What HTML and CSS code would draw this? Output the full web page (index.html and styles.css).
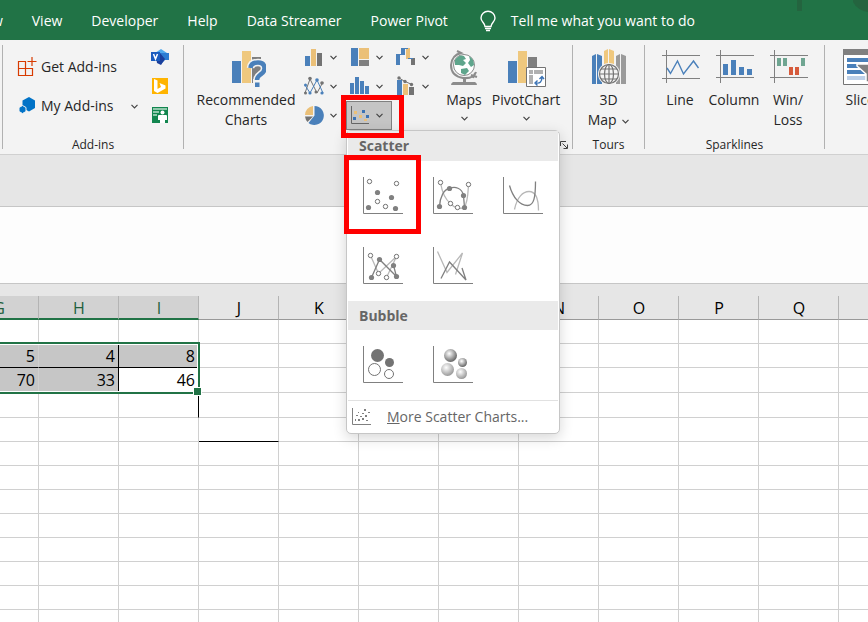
FILE: index.html
```html
<!DOCTYPE html>
<html lang="en">
<head>
    <meta charset="UTF-8">
    <meta name="viewport" content="width=device-width, initial-scale=1.0">
    <title>Spreadsheet - Insert Scatter Chart</title>
    <link rel="stylesheet" href="styles.css">
</head>
<body>
    <svg class="defs" aria-hidden="true">
        <defs>
            <symbol id="chevron" viewBox="0 0 7 5"><path d="M.5 .8L3.5 3.8L6.5 .8" fill="none" stroke="#444" stroke-width="1.2"/></symbol>
            <radialGradient id="ballDark" cx=".4" cy=".35" r=".65">
                <stop offset="0" stop-color="#fff"/>
                <stop offset="1" stop-color="#666"/>
            </radialGradient>
            <radialGradient id="ballLight" cx=".4" cy=".35" r=".65">
                <stop offset="0" stop-color="#fff"/>
                <stop offset="1" stop-color="#999"/>
            </radialGradient>
        </defs>
    </svg>

    <!-- Tabs -->
    <header class="tabbar">
        <nav class="tabs">
            <a href="#">Review</a>
            <a href="#">View</a>
            <a href="#">Developer</a>
            <a href="#">Help</a>
            <a href="#">Data Streamer</a>
            <a href="#">Power Pivot</a>
        </nav>
        <button class="tell-me">
            <svg width="16" height="22" viewBox="0 0 16 22" fill="none" stroke="#fff" stroke-width="1.4"><path d="M5 16.500C5 13 1 12 1 8A6.800 6.500 0 0 1 15 8C15 12 11 13 11 16.500ZM5 18.500H11M6 20.500H10"/></svg>
            <span>Tell me what you want to do</span>
        </button>
        <svg class="tabbar-art" width="72" height="14" viewBox="0 0 72 14" fill="#24643f"><path d="M1 0H6V11H1ZM57 0H72V12Q61 10 57 2Z"/></svg>
    </header>

    <!-- Ribbon -->
    <div class="ribbon">
        <span class="divider divider-first"></span>
        <section class="group group-addins">
            <div class="group-body">
                <div class="addin-list">
                    <button class="addin">
                        <svg width="20" height="20" viewBox="0 0 20 20" fill="none" stroke="#d83b01" stroke-width="1.2"><path d="M1.500 4.500H8.500V18.500H1.500ZM1.500 11.500H15.500V18.500H8.500M15 0V9M10.500 4.500H19.500"/></svg>
                        <span>Get Add-ins</span>
                    </button>
                    <button class="addin">
                        <svg width="20" height="20" viewBox="0 0 20 20" fill="#0173c7"><path d="M12 1L18 4.500V12L12 15.500L5.500 12V4.500Z"/><path d="M5.500 9.500L9 11.500V15.500L5.500 17.500L2 15.500V11.500Z" stroke="#f3f3f3"/></svg>
                        <span>My Add-ins</span>
                        <svg class="chevron" width="7" height="5"><use href="#chevron"/></svg>
                    </button>
                </div>
                <div class="addin-apps">
                    <button class="app" aria-label="Visio">
                        <svg width="18" height="18" viewBox="0 0 18 18"><path d="M10 1L16 5L10 9L4 5Z" fill="#4fa9ee"/><path d="M9 5H18V12H14L10 16Z" fill="#2b7cd3"/><path d="M5 9L9 5L14 11L10 17L6 15Z" fill="#1a3f9c"/><path d="M0 4H9V13H0Z" fill="#1b5cbe"/><path d="M2.500 6L4.500 11L6.500 6" fill="none" stroke="#fff" stroke-width="1.5"/></svg>
                    </button>
                    <button class="app" aria-label="Bing Maps">
                        <svg width="18" height="18" viewBox="0 0 18 18"><path d="M1 1H17V17H1Z" fill="#ffb400"/><path d="M3 2L6.500 3.500V12L10 10L8.500 6L14.500 8.500V11.500L6.500 16L3 14Z" fill="#fff"/></svg>
                    </button>
                    <button class="app" aria-label="People Graph">
                        <svg width="18" height="18" viewBox="0 0 18 18"><path d="M1 1H17V17H1Z" fill="#12864f"/><path d="M2 2H16V4H2ZM2 5H8V7H2ZM2 8H6V10H2Z" fill="#8fc9ac"/><circle cx="11.5" cy="6.5" r="2" fill="#fff"/><path d="M7 10Q7 9 8 9H15Q16 9 16 10V14H14V17H9V14H7Z" fill="#fff"/></svg>
                    </button>
                </div>
            </div>
            <div class="group-label"><span>Add-ins</span></div>
        </section>

        <span class="divider"></span>
        <section class="group group-charts">
            <div class="group-body">
                <button class="large large-wide">
                    <svg width="40" height="40" viewBox="0 0 40 40"><path d="M6 13H15V35H6Z" fill="#4a80ba"/><path d="M16 3H25V35H16Z" fill="#efc87e"/><path d="M26 9H35V35H26Z" fill="#7f7f7f"/><path d="M24.500 20Q25 14.500 32 14.500Q38.500 14.500 38.500 20.500Q38.500 24 34.500 26.500Q31 29 31 32" fill="none" stroke="#f3f3f3" stroke-width="7.5"/><path d="M27 31H35V40H27Z" fill="#f3f3f3"/><path d="M24.500 20Q25 14.500 32 14.500Q38.500 14.500 38.500 20.500Q38.500 24 34.500 26.500Q31 29 31 32" fill="none" stroke="#4a80ba" stroke-width="4.5"/><path d="M29 34.500H33.500V39H29Z" fill="#4a80ba"/></svg>
                    <span>Recommended<br>Charts</span>
                </button>
                <div class="chart-grid">
                    <button class="small" aria-label="Column or bar chart">
                        <svg width="20" height="20" viewBox="0 0 20 20"><path d="M1 9H6V19H1Z" fill="#4a80ba"/><path d="M7 2H12V19H7Z" fill="#ebc078"/><path d="M13 6H18V19H13Z" fill="#737373"/></svg>
                        <svg class="chevron" width="7" height="5"><use href="#chevron"/></svg>
                    </button>
                    <button class="small" aria-label="Hierarchy chart">
                        <svg width="20" height="20" viewBox="0 0 20 20"><path d="M1 1H8V19H1Z" fill="#4a80ba"/><path d="M9 1H19V12H9Z" fill="#ebc078"/><path d="M9 13H19V19H9Z" fill="#7f7f7f"/></svg>
                        <svg class="chevron" width="7" height="5"><use href="#chevron"/></svg>
                    </button>
                    <button class="small" aria-label="Waterfall chart">
                        <svg width="20" height="20" viewBox="0 0 20 20"><path d="M0 7H4V18H0ZM5 1H9V8H5Z" fill="#4a80ba"/><path d="M10 1H14V12H10Z" fill="#ebc078"/><path d="M15 11H19V18H15Z" fill="#737373"/><path d="M2 7.500H7M7 1.500H12M12 11.500H17" stroke="#4a80ba"/></svg>
                        <svg class="chevron" width="7" height="5"><use href="#chevron"/></svg>
                    </button>
                    <button class="small" aria-label="Line chart">
                        <svg width="20" height="20" viewBox="0 0 20 20"><path d="M1 17L6 3L13 17L19 6" fill="none" stroke="#737373"/><path d="M1 9L6 17L13 4L19 17" fill="none" stroke="#4a80ba"/><g fill="#737373"><circle cx="1.5" cy="17" r="1.5"/><circle cx="6" cy="2.5" r="1.8"/><circle cx="12" cy="16" r="1.5"/><circle cx="18" cy="7" r="1.8"/></g><g fill="#4a80ba"><circle cx="1.5" cy="9" r="1.5"/><circle cx="6" cy="17" r="1.6"/><circle cx="13" cy="4" r="1.8"/><circle cx="18" cy="17" r="1.6"/></g></svg>
                        <svg class="chevron" width="7" height="5"><use href="#chevron"/></svg>
                    </button>
                    <button class="small" aria-label="Statistic chart">
                        <svg width="20" height="20" viewBox="0 0 20 20" fill="#4a80ba"><path d="M0 7H4V18H0ZM5 1H9V18H5ZM10 5H14V18H10ZM15 10H19V18H15Z"/></svg>
                        <svg class="chevron" width="7" height="5"><use href="#chevron"/></svg>
                    </button>
                    <button class="small" aria-label="Combo chart">
                        <svg width="20" height="20" viewBox="0 0 20 20"><path d="M1 4H6V19H1Z" fill="#4a80ba"/><path d="M7 8H12V19H7Z" fill="#ebc078"/><path d="M13 11H18V19H13Z" fill="#737373"/><path d="M3 2L9 5.500L16 8.500" fill="none" stroke="#737373"/><g fill="#737373"><circle cx="3" cy="2" r="1.7"/><circle cx="9" cy="5.5" r="1.7"/><circle cx="15.5" cy="8.5" r="1.7"/></g></svg>
                        <svg class="chevron" width="7" height="5"><use href="#chevron"/></svg>
                    </button>
                    <button class="small" aria-label="Pie chart">
                        <svg width="20" height="20" viewBox="0 0 20 20"><path d="M10.500 10.500V1A9.500 9.500 0 1 1 4.500 18Z" fill="#4a80ba"/><path d="M9 10V1A9 9 0 0 0 1 10Z" fill="#ebc078"/><path d="M9 11.500H1Q1.500 15 3.500 17Z" fill="#737373"/></svg>
                        <svg class="chevron" width="7" height="5"><use href="#chevron"/></svg>
                    </button>
                    <div class="dropdown">
                        <button class="small active" aria-label="Scatter or bubble chart" aria-expanded="true">
                            <svg width="20" height="20" viewBox="0 0 20 20"><path d="M1.500 1V18.500H19" fill="none" stroke="#666"/><path d="M4 6H7V9H4ZM9 10H12V13H9ZM14 14H17V16H14Z" fill="#ebc078"/><path d="M12 5H15V8H12ZM3 12H6V15H3ZM16 10H19V13H16Z" fill="#3a72b4"/></svg>
                            <svg class="chevron" width="7" height="5"><use href="#chevron"/></svg>
                        </button>

                        <!-- Scatter menu -->
                        <div class="menu">
                            <h2 class="menu-title">Scatter</h2>
                            <div class="menu-grid">
                                <div class="menu-cell">
                                    <button class="menu-item" aria-label="Scatter">
                                        <svg width="40" height="40" viewBox="0 0 40 40"><path class="axis" d="M.5 0V36.500H40"/><g class="dot-open"><circle cx="6.5" cy="4.5" r="2.2"/><circle cx="33.5" cy="6.5" r="2.2"/><circle cx="14.5" cy="24.5" r="2.2"/><circle cx="22.5" cy="29.5" r="2.2"/></g><g class="dot"><circle cx="14.5" cy="15.5" r="2.6"/><circle cx="28.5" cy="20.5" r="2.6"/><circle cx="5.5" cy="30.5" r="2.6"/><circle cx="32.5" cy="31.5" r="2.6"/></g></svg>
                                    </button>
                                    <span class="mark mark-item"></span>
                                </div>
                                <button class="menu-item" aria-label="Scatter with smooth lines and markers">
                                    <svg width="40" height="40" viewBox="0 0 40 40"><path class="axis" d="M.5 0V36.500H40"/><path class="light" d="M7.500 5.500C9 15 13 23 17.500 26.500C22 32 28 32 31 30.500C35 26 35 15 35.500 7.500"/><path class="dark" d="M6.500 29.500C7 20 11 12 16.500 11.500C22 9 29 11 30.500 18.500L31.500 30.500"/><g class="dot-open"><circle cx="7.5" cy="5.5" r="2.2"/><circle cx="35.5" cy="7.5" r="2.2"/><circle cx="17.5" cy="26.5" r="2.2"/><circle cx="24.5" cy="30.5" r="2.2"/></g><g class="dot"><circle cx="16.5" cy="11.5" r="2.6"/><circle cx="30.5" cy="18.5" r="2.6"/><circle cx="6.5" cy="29.5" r="2.6"/><circle cx="31.5" cy="30.5" r="2.6"/></g></svg>
                                </button>
                                <button class="menu-item" aria-label="Scatter with smooth lines">
                                    <svg width="40" height="40" viewBox="0 0 40 40"><path class="axis" d="M.5 0V36.500H40"/><path class="light" d="M11.500 32.500C14 20 20 14.500 26 14.500C33 14.500 35.500 23 35.500 33.500"/><path class="dark" d="M6.500 8.500C10 21 17 28.500 24.500 28.500C31 28.500 32.500 20 32.500 4.500"/></svg>
                                </button>
                                <button class="menu-item" aria-label="Scatter with straight lines and markers">
                                    <svg width="40" height="40" viewBox="0 0 40 40"><path class="axis" d="M.5 0V36.500H40"/><path class="light" d="M7.500 8.500L15.500 26.500L33.500 9.500L23.500 30.500"/><path class="dark" d="M8.500 30.500L16.500 12.500L33.500 29.500L30.500 18.500"/><g class="dot-open"><circle cx="7.5" cy="8.5" r="2.2"/><circle cx="33.5" cy="9.5" r="2.2"/><circle cx="15.5" cy="26.5" r="2.2"/><circle cx="23.5" cy="30.5" r="2.2"/></g><g class="dot"><circle cx="16.5" cy="12.5" r="2.6"/><circle cx="30.5" cy="18.5" r="2.6"/><circle cx="8.5" cy="30.5" r="2.6"/><circle cx="33.5" cy="29.5" r="2.6"/></g></svg>
                                </button>
                                <button class="menu-item" aria-label="Scatter with straight lines">
                                    <svg width="40" height="40" viewBox="0 0 40 40"><path class="axis" d="M.5 0V36.500H40"/><path class="light" d="M4.500 4.500L14 25.500L29.500 6L22.500 27.500"/><path class="dark" d="M8 31.500L16.500 15L33 33L29 21"/></svg>
                                </button>
                            </div>
                            <h2 class="menu-title">Bubble</h2>
                            <div class="menu-grid">
                                <button class="menu-item" aria-label="Bubble">
                                    <svg width="40" height="40" viewBox="0 0 40 40"><path class="axis" d="M.5 0V36.500H40"/><circle cx="14.5" cy="9.5" r="6.5" fill="#737373"/><circle cx="26.5" cy="16.5" r="4.5" fill="#737373"/><g class="dot-open"><circle cx="11.5" cy="23.5" r="6"/><circle cx="26" cy="28" r="4.5"/></g></svg>
                                </button>
                                <button class="menu-item" aria-label="3-D Bubble">
                                    <svg width="40" height="40" viewBox="0 0 40 40"><path class="axis" d="M.5 0V36.500H40"/><circle cx="17.5" cy="9.5" r="6.5" fill="url(#ballDark)"/><circle cx="29.5" cy="16.5" r="4.5" fill="url(#ballDark)"/><circle cx="14.5" cy="23.5" r="6.5" fill="url(#ballLight)"/><circle cx="28.5" cy="27.5" r="5.5" fill="url(#ballLight)"/></svg>
                                </button>
                            </div>
                            <button class="menu-more">
                                <svg width="20" height="18" viewBox="0 0 20 18"><path class="axis" d="M.5 0V16.500H19"/><path d="M12 1h2v2h-2zM6 4h1v1h-1zM10 5h2v1h-2zM16 4h2v1h-2zM4 7h2v1h-2zM13 7h2v2h-2zM8 8h2v1h-2zM3 11h1v2h-1zM6 11h2v2h-2zM10 10h2v2h-2zM14 12h2v1h-2z" fill="#808080"/></svg>
                                <span><u>M</u>ore Scatter Charts...</span>
                            </button>
                        </div>
                        <span class="mark mark-button"></span>
                    </div>
                </div>
                <button class="large large-maps">
                    <svg width="40" height="40" viewBox="0 0 40 40"><circle cx="20" cy="17" r="10.5" fill="#fff" stroke="#8c8c8c"/><path d="M11 12Q15 6 20 8L22 11L19 12L22 15L19 18L15 17L11 17ZM25 8Q30 11 30 17L27 19L24 15L26 12ZM17 21L23 20L25 23L21 27L17 25Z" fill="#5fa58c"/><path d="M13 3L17 5Q8 7 7 17Q7 28 19 30Q30 31 32 24M27 27L33 29M29 30L31 25" fill="none" stroke="#8c8c8c" stroke-width="2"/><path d="M19 30H22V34H31Q33 35 33 37H7Q7 35 9 34H19Z" fill="#8c8c8c"/></svg>
                    <span>Maps</span>
                    <svg class="chevron" width="7" height="5"><use href="#chevron"/></svg>
                </button>
                <button class="large large-pivot">
                    <svg width="40" height="40" viewBox="0 0 40 40"><path d="M2 13H11V35H2Z" fill="#4a80ba"/><path d="M12 3H21V35H12Z" fill="#efc87e"/><path d="M22 9H31V19H22Z" fill="#7f7f7f"/><path d="M20.500 19.500H39.500V38.500H20.500Z" fill="#fff" stroke="#737373"/><path d="M23 22H27V26H23ZM28 22H37V26H28ZM23 27H27V36H23Z" fill="#b0b0b0"/><path d="M30 35Q36 36 36 29M31.500 32.500L29 35L31.500 37.500M33.500 31L36 28.500L38 31" fill="none" stroke="#3a72b4" stroke-width="1.4"/></svg>
                    <span>PivotChart</span>
                    <svg class="chevron" width="7" height="5"><use href="#chevron"/></svg>
                </button>
            </div>
            <div class="group-label">
                <button class="launcher" aria-label="See all charts">
                    <svg width="8" height="8" viewBox="0 0 8 8" fill="none" stroke="#444"><path d="M.5 5V.5H6M2.500 2.500L7 7M3.500 7.500H7.500V3.500"/></svg>
                </button>
            </div>
        </section>

        <span class="divider"></span>
        <section class="group">
            <div class="group-body">
                <button class="large large-tour">
                    <svg width="40" height="40" viewBox="0 0 40 40"><path d="M3 8L7 6V36H3ZM8 6L13 8V36H8Z" fill="#4a80ba"/><path d="M15 3L19 1V36H15ZM20 1L25 3V36H20Z" fill="#efc87e"/><path d="M27 8L31 6V36H27ZM32 6L37 8V36H32Z" fill="#9a9a9a"/><circle cx="20" cy="26" r="11" fill="#f3f3f3"/><g fill="none" stroke="#737373" stroke-width="1.2"><circle cx="20" cy="26" r="9.5"/><ellipse cx="20" cy="26" rx="4.5" ry="9.5"/><path d="M20 16.500V35.500M10.500 26H29.500M12 21H28M12 31H28"/></g></svg>
                    <span>3D<br>Map <svg class="chevron" width="7" height="5"><use href="#chevron"/></svg></span>
                </button>
            </div>
            <div class="group-label"><span>Tours</span></div>
        </section>

        <span class="divider"></span>
        <section class="group group-spark">
            <div class="group-body">
                <button class="large">
                    <svg width="40" height="40" viewBox="0 0 40 40" fill="none"><path d="M6.500 2V35M2 7.500H40M2 30.500H40" stroke="#808080"/><path d="M7 20L10.500 25.500L17.500 13L23.500 26L33.500 13L38.500 20" stroke="#4a80ba" stroke-width="1.4"/></svg>
                    <span>Line</span>
                </button>
                <button class="large">
                    <svg width="40" height="40" viewBox="0 0 40 40" fill="none"><path d="M6.500 2V35M2 7.500H40M2 29.500H40" stroke="#808080"/><path d="M9 16H14V27H9ZM17 12H22V27H17ZM25 19H30V27H25ZM33 21H38V27H33Z" fill="#4a80ba"/></svg>
                    <span>Column</span>
                </button>
                <button class="large">
                    <svg width="40" height="40" viewBox="0 0 40 40" fill="none"><path d="M6.500 2V35M2 7.500H40M2 29.500H40" stroke="#808080"/><path d="M9 10H13V18H9ZM15 10H19V18H15ZM33 10H37V18H33Z" fill="#6fa591"/><path d="M21 19H25V27H21ZM27 19H31V27H27Z" fill="#d65b3c"/></svg>
                    <span>Win/<br>Loss</span>
                </button>
            </div>
            <div class="group-label"><span>Sparklines</span></div>
        </section>

        <span class="divider"></span>
        <section class="group group-filters">
            <div class="group-body">
                <button class="large large-slicer">
                    <svg width="40" height="40" viewBox="0 0 40 40"><path d="M.5 1.500H38.500V36.500H.5Z" fill="#fff" stroke="#737373"/><path d="M0 1H39V7H0Z" fill="#808080"/><path d="M4 10H34V14H4ZM4 16H34V20H4ZM4 22H34V26H4Z" fill="#4a80ba"/><path d="M4 28H34V32H4Z" fill="#bdd0e8"/><path d="M14 16H38V18L29 26V34H23V26L14 18Z" fill="#808080" stroke="#fff" stroke-width="1.5"/></svg>
                    <span>Slicer</span>
                </button>
            </div>
        </section>
    </div>

    <div class="band"></div>
    <div class="formula-area"></div>

    <!-- Sheet -->
    <main class="sheet">
        <table class="grid">
            <thead>
                <tr><th class="sel">G</th><th class="sel">H</th><th class="sel">I</th><th>J</th><th>K</th><th>L</th><th>M</th><th>N</th><th>O</th><th>P</th><th>Q</th><th>R</th></tr>
            </thead>
            <tbody>
                <tr><td></td><td></td><td></td><td></td><td></td><td></td><td></td><td></td><td></td><td></td><td></td><td></td></tr>
                <tr><td class="fill line-b">5</td><td class="fill line-b line-r">4</td><td class="fill line-b corner">8<span class="selection"></span></td><td></td><td></td><td></td><td></td><td></td><td></td><td></td><td></td><td></td></tr>
                <tr class="tall"><td class="fill">70</td><td class="fill line-r">33</td><td>46</td><td></td><td></td><td></td><td></td><td></td><td></td><td></td><td></td><td></td></tr>
                <tr class="tall"><td></td><td></td><td class="line-r"></td><td></td><td></td><td></td><td></td><td></td><td></td><td></td><td></td><td></td></tr>
                <tr><td></td><td></td><td></td><td class="line-b"></td><td></td><td></td><td></td><td></td><td></td><td></td><td></td><td></td></tr>
                <tr><td></td><td></td><td></td><td></td><td></td><td></td><td></td><td></td><td></td><td></td><td></td><td></td></tr>
                <tr><td></td><td></td><td></td><td></td><td></td><td></td><td></td><td></td><td></td><td></td><td></td><td></td></tr>
                <tr><td></td><td></td><td></td><td></td><td></td><td></td><td></td><td></td><td></td><td></td><td></td><td></td></tr>
                <tr><td></td><td></td><td></td><td></td><td></td><td></td><td></td><td></td><td></td><td></td><td></td><td></td></tr>
                <tr><td></td><td></td><td></td><td></td><td></td><td></td><td></td><td></td><td></td><td></td><td></td><td></td></tr>
                <tr><td></td><td></td><td></td><td></td><td></td><td></td><td></td><td></td><td></td><td></td><td></td><td></td></tr>
                <tr><td></td><td></td><td></td><td></td><td></td><td></td><td></td><td></td><td></td><td></td><td></td><td></td></tr>
                <tr><td></td><td></td><td></td><td></td><td></td><td></td><td></td><td></td><td></td><td></td><td></td><td></td></tr>
            </tbody>
        </table>
    </main>
</body>
</html>
```

FILE: styles.css
```css
/* General */
* {
    box-sizing: border-box;
}

body {
    margin: 0;
    height: 100vh;
    display: flex;
    flex-direction: column;
    overflow: hidden;
    background: #e6e6e6;
    color: #262626;
    font-family: "Open Sans", "Noto Sans", sans-serif;
    font-size: 14px;
    line-height: 20px;
}

button {
    margin: 0;
    padding: 0;
    border: 0;
    background: none;
    color: inherit;
    font: inherit;
    white-space: nowrap;
}

svg {
    display: block;
    flex-shrink: 0;
}

.defs {
    position: absolute;
    width: 0;
    height: 0;
}

/* Tabs */
.tabbar {
    position: relative;
    flex-shrink: 0;
    display: flex;
    align-items: center;
    gap: 32px;
    height: 40px;
    padding-top: 1px;
    background: #217346;
    color: #fff;
    white-space: nowrap;
}

.tabs {
    display: flex;
    gap: 29px;
    margin-left: -43px;
}

.tabs a {
    color: #fff;
    text-decoration: none;
}

.tell-me {
    display: flex;
    align-items: center;
    gap: 15px;
}

.tabbar-art {
    position: absolute;
    top: 0;
    right: 0;
}

/* Ribbon */
.ribbon {
    flex-shrink: 0;
    display: flex;
    background: #f3f3f3;
    border-bottom: 1px solid #d0d0d0;
}

.divider {
    flex-shrink: 0;
    width: 1px;
    margin: 5px 0;
    background: #b1b1b1;
}

.divider-first {
    margin-left: 2px;
}

.group {
    flex-shrink: 0;
    display: flex;
    flex-direction: column;
}

.group-body {
    display: flex;
    height: 90px;
}

.group-label {
    display: flex;
    justify-content: center;
    min-height: 18px;
    margin-top: 6px;
    font-size: 12px;
    line-height: 18px;
}

.group-charts .group-body {
    padding: 0 10px 0 8px;
}

.group-spark .group-body,
.group-filters .group-body {
    padding: 0 9px 0 8px;
}

.group-addins .group-body {
    gap: 9px;
    padding: 0 13px 0 14px;
}

.addin-list {
    display: flex;
    flex-direction: column;
    padding-top: 8px;
}

.addin {
    display: flex;
    align-items: center;
    gap: 4px;
    width: 124px;
    height: 39px;
    padding-bottom: 1px;
}

.addin .chevron {
    margin-left: auto;
    margin-right: 3px;
}

.addin-apps {
    display: flex;
    flex-direction: column;
    padding-top: 3px;
}

.app {
    display: flex;
    align-items: center;
    justify-content: center;
    width: 20px;
    height: 29px;
    padding-bottom: 1px;
}

.large {
    display: flex;
    flex-direction: column;
    align-items: center;
    gap: 2px;
    width: 54px;
    padding-top: 8px;
}

.large > .chevron {
    margin-top: 4px;
}

.large span .chevron {
    display: inline-block;
    margin-left: 2px;
    vertical-align: middle;
}

.large-wide {
    width: 108px;
}

.large-maps {
    width: 52px;
}

.large-pivot {
    width: 72px;
}

.large-tour {
    width: 71px;
}

.large-slicer {
    width: 60px;
}

.chart-grid {
    display: grid;
    grid-template-columns: repeat(3, 46px);
    grid-auto-rows: 29px;
    padding-top: 3px;
}

.small {
    display: flex;
    align-items: center;
    gap: 6px;
    width: 46px;
    height: 29px;
    padding: 0 0 1px 4px;
}

.small.active {
    background: #c5c5c5;
    box-shadow: inset 0 0 0 1px #808080;
}

.launcher {
    display: flex;
    align-items: center;
    margin-left: auto;
    margin-right: 4px;
}

/* Scatter menu */
.dropdown {
    position: relative;
}

.menu {
    position: absolute;
    z-index: 2;
    top: 29px;
    left: 0;
    width: 214px;
    padding: 0 1px;
    background: #fff;
    border: 1px solid #c6c6c6;
    border-radius: 5px;
    box-shadow: 0 4px 14px rgba(0, 0, 0, 0.16);
    color: #666;
}

.menu-title {
    margin: 0;
    padding-left: 11px;
    background: #eaeaea;
    font-size: 14px;
    font-weight: 700;
    line-height: 30px;
}

.menu-grid + .menu-title {
    line-height: 29px;
}

.menu-grid {
    display: grid;
    grid-template-columns: repeat(3, 70px);
    grid-auto-rows: 70px;
}

.menu-cell {
    position: relative;
}

.menu-item {
    display: flex;
    width: 70px;
    height: 70px;
    padding: 16px 15px;
}

.menu-more {
    display: flex;
    align-items: center;
    gap: 15px;
    width: 100%;
    height: 33px;
    padding-left: 4px;
    border-top: 1px solid #e1e1e1;
}

.axis {
    fill: none;
    stroke: #808080;
}

.dark {
    fill: none;
    stroke: #808080;
    stroke-width: 1.3;
}

.light {
    fill: none;
    stroke: #b8b8b8;
    stroke-width: 1.3;
}

.dot {
    fill: #808080;
}

.dot-open {
    fill: #fff;
    stroke: #737373;
}

/* Red callout frames */
.mark {
    position: absolute;
    z-index: 3;
    border: 5px solid #f00;
    pointer-events: none;
}

.mark-button {
    inset: -6px -12px -8px -5px;
}

.mark-item {
    inset: -6px -3px -3px -4px;
}

/* Formula area */
.band {
    flex-shrink: 0;
    height: 51px;
}

.formula-area {
    flex-shrink: 0;
    height: 78px;
    background: #fdfdfd;
    border-top: 1px solid #c6c6c6;
    border-bottom: 1px solid #c6c6c6;
}

/* Sheet */
.sheet {
    flex: 1;
    min-height: 0;
    padding-top: 12px;
    overflow: hidden;
}

.grid {
    width: 960px;
    margin-left: -41px;
    border-collapse: separate;
    border-spacing: 0;
    table-layout: fixed;
    background: #fff;
    color: #000;
    font-size: 16px;
}

.grid th {
    height: 24px;
    padding: 0 0 0 1px;
    background: #e6e6e6;
    border-bottom: 1px solid #999;
    border-right: 1px solid #b4b4b4;
    font-weight: 400;
}

.grid th.sel {
    padding-top: 1px;
    background: #d2d2d2;
    border-bottom: 2px solid #217346;
    color: #1f5f3d;
}

.grid td {
    height: 24px;
    padding: 0 3px;
    border-right: 1px solid #d0d0d0;
    border-bottom: 1px solid #d0d0d0;
    text-align: right;
}

.grid .tall td {
    height: 25px;
}

.grid td.fill {
    background: #c6c6c6;
}

.grid td.line-r {
    border-right-color: #000;
}

.grid td.line-b {
    border-bottom-color: #000;
}

.corner {
    position: relative;
}

/* Green selection frame with its fill handle */
.selection {
    position: absolute;
    top: -2px;
    right: -2px;
    width: 260px;
    height: 52px;
    border: 2px solid #217346;
    box-shadow: inset 0 0 0 1px #fff;
}

.selection::after {
    content: "";
    position: absolute;
    right: -4px;
    bottom: -4px;
    width: 7px;
    height: 7px;
    background: #217346;
    border: 1px solid #fff;
}
```
